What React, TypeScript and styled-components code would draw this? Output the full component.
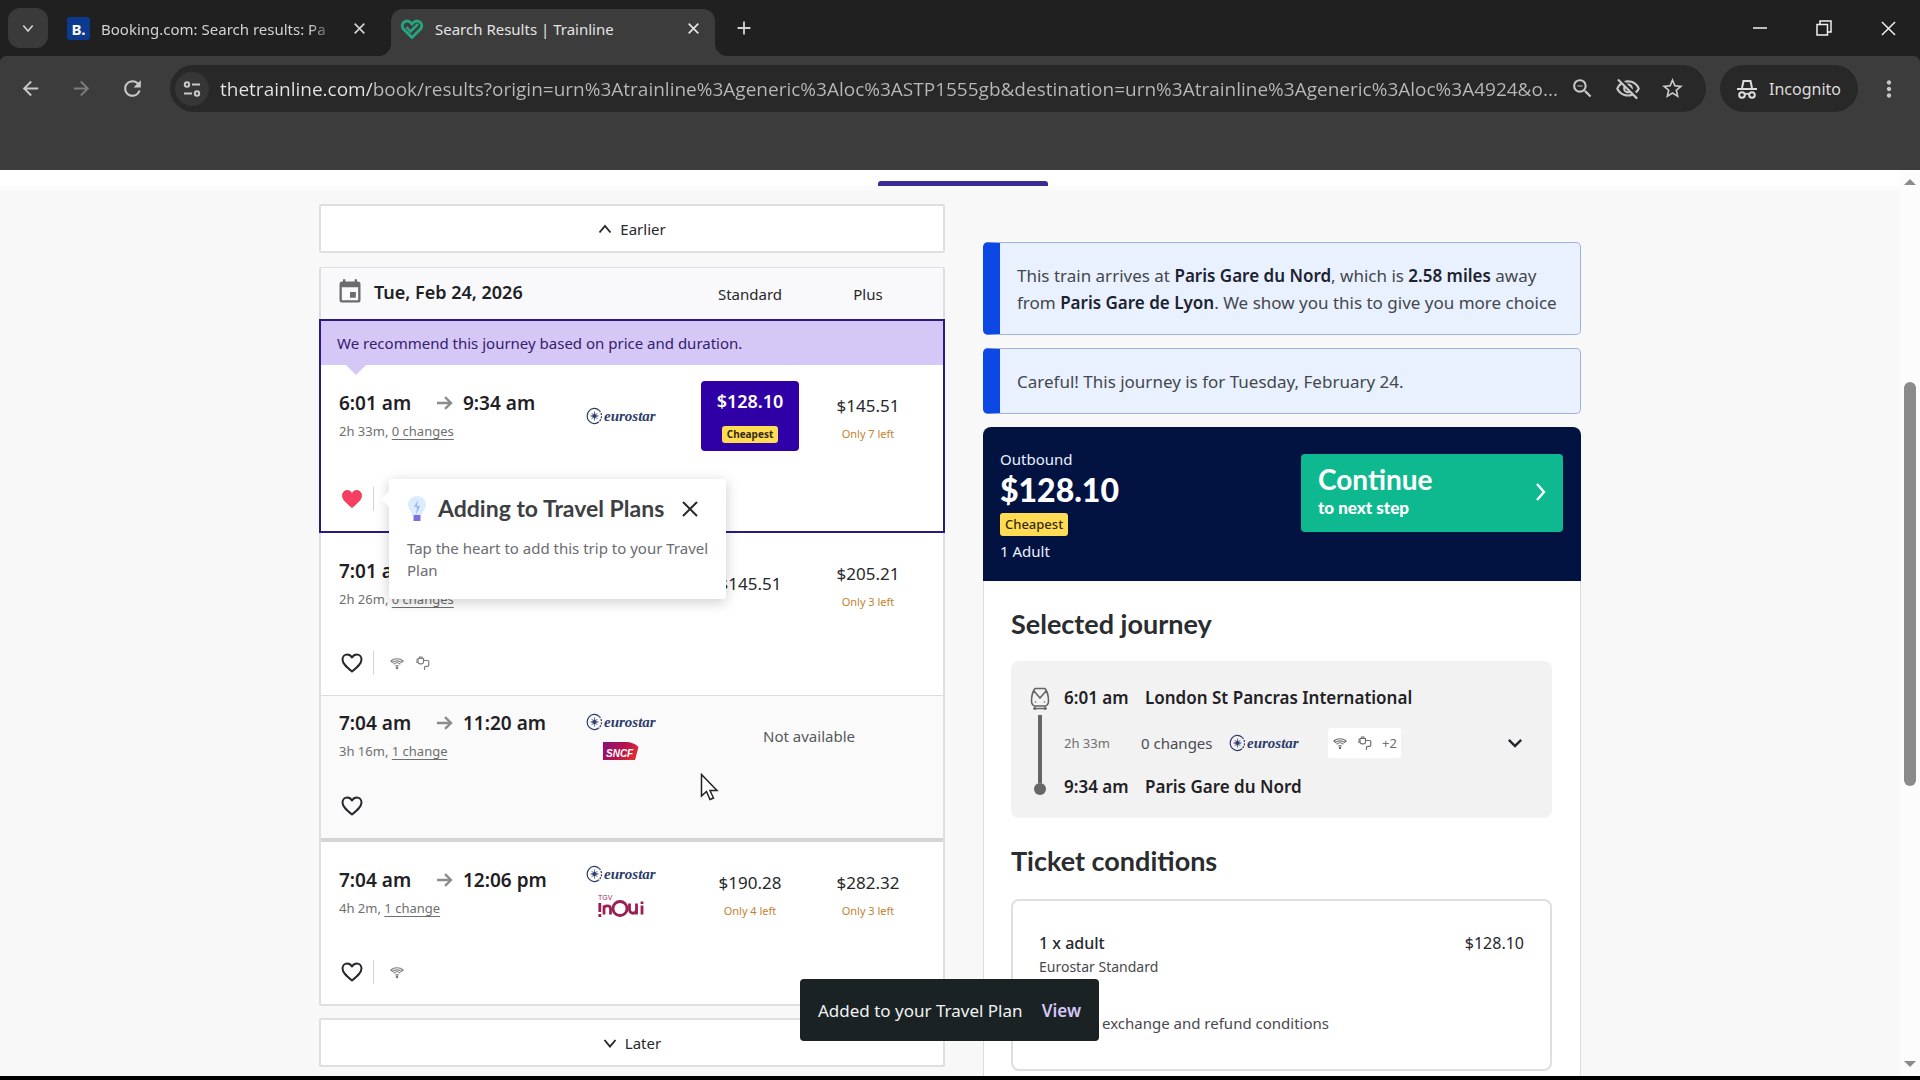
import React from 'react';
import styled, { createGlobalStyle, css } from 'styled-components';
import {
  MdAdd,
  MdArrowBack,
  MdArrowForward,
  MdClose,
  MdEvent,
  MdKeyboardArrowDown,
  MdMoreVert,
  MdOutlineVisibilityOff,
  MdRefresh,
  MdStarBorder,
  MdZoomOut,
} from 'react-icons/md';

const sans = '"Noto Sans", "Open Sans", sans-serif';
const display = 'Lato, "Open Sans", sans-serif';

const GlobalStyle = createGlobalStyle`
  * { box-sizing: border-box; }
  body { margin: 0; background: #000; font-family: ${sans}; color: #26282b; }
  button, input { font: inherit; color: inherit; }
  button { background: none; border: 0; padding: 0; cursor: pointer; }
  ul, h1, h2, p { margin: 0; padding: 0; list-style: none; }
  svg { display: block; flex: none; }
`;

const Screen = styled.div`
  position: relative;
  display: flex;
  flex-direction: column;
  min-height: 100vh;
  overflow: hidden;
  border-bottom: 4px solid #000;
  background: #f8f8f9;
`;

/* ---------- browser frame ---------- */

const TabStrip = styled.div`
  display: flex;
  align-items: flex-end;
  height: 56px;
  padding-left: 8px;
  background: #202020;
  color: #d2d2d2;
`;

const TabSearch = styled.button`
  display: grid;
  place-items: center;
  width: 40px;
  height: 40px;
  margin-bottom: 8px;
  border-radius: 12px;
  background: #3a3a3a;
`;

const Tab = styled.div<{ $active?: boolean }>`
  position: relative;
  display: flex;
  align-items: center;
  gap: 11px;
  width: ${(p) => (p.$active ? 324 : 343)}px;
  height: 47px;
  padding: ${(p) => (p.$active ? '0 11px 8px 9px' : '0 21px 8px 19px')};
  border-radius: 12px 12px 0 0;
  font-size: 15px;
  ${(p) =>
    p.$active &&
    css`
      background: #3c3c3c;
      color: #e4e4e4;
      &::before,
      &::after {
        content: '';
        position: absolute;
        bottom: 0;
        width: 12px;
        height: 12px;
      }
      &::before {
        right: 100%;
        background: radial-gradient(circle at 0 0, transparent 12px, #3c3c3c 12px);
      }
      &::after {
        left: 100%;
        background: radial-gradient(circle at 100% 0, transparent 12px, #3c3c3c 12px);
      }
    `}
`;

const TabTitle = styled.span<{ $fade?: boolean }>`
  flex: 1;
  min-width: 0;
  overflow: hidden;
  white-space: nowrap;
  ${(p) => p.$fade && css`mask-image: linear-gradient(to right, #000 88%, transparent);`}
`;

const TabClose = styled.button`
  display: grid;
  place-items: center;
  width: 22px;
  height: 22px;
`;

const Favicon = styled.span`
  display: grid;
  place-items: center;
  width: 23px;
  height: 23px;
  border-radius: 3px;
  background: #0b3a8e;
  color: #fff;
  font-size: 15px;
  font-weight: 700;
`;

const NewTab = styled.button`
  display: grid;
  place-items: center;
  width: 40px;
  height: 40px;
  margin: 0 0 8px 9px;
`;

const WindowControls = styled.div`
  display: flex;
  margin-left: auto;
  height: 56px;
  color: #f0f0f0;
`;

const WindowButton = styled.button`
  display: grid;
  place-items: center;
  width: 64px;
`;

const FrameBack = styled.div`
  background: #202020;
`;

const Toolbar = styled.div`
  display: flex;
  align-items: flex-start;
  height: 114px;
  padding: 9px 0 0 5px;
  background: #3c3c3c;
  border-radius: 6px 6px 0 0;
  color: #c8c8c8;
`;

const ToolButton = styled.button<{ $dim?: boolean }>`
  display: grid;
  place-items: center;
  width: 51px;
  height: 47px;
  color: ${(p) => (p.$dim ? '#7c7c7c' : '#c8c8c8')};
`;

const AddressBar = styled.div`
  display: flex;
  flex: 1;
  align-items: center;
  height: 47px;
  margin: 0 14px 0 12px;
  padding: 0 11px 0 5px;
  border-radius: 24px;
  background: #282828;
`;

const SiteInfo = styled.button`
  display: grid;
  place-items: center;
  width: 34px;
  height: 34px;
  border-radius: 50%;
  background: #363636;
`;

const AddressInput = styled.input`
  flex: 1;
  min-width: 0;
  height: 32px;
  margin-left: 11px;
  padding: 0;
  border: 0;
  outline: 0;
  font-family: 'Open Sans', sans-serif;
  font-size: 19px;
  color: transparent;
  background: linear-gradient(to right, #e6e6e6 152px, #b9b9b9 152px) text;
`;

const AddressAction = styled.button`
  display: grid;
  place-items: center;
  width: 45px;
  height: 40px;
`;

const Incognito = styled.button`
  display: flex;
  align-items: center;
  justify-content: center;
  gap: 12px;
  width: 138px;
  height: 47px;
  border-radius: 24px;
  background: #282828;
  color: #dcdcdc;
  font-size: 16px;
`;

const MenuButton = styled.button`
  display: grid;
  place-items: center;
  width: 62px;
  height: 47px;
`;

/* ---------- page ---------- */

const Viewport = styled.div`
  display: flex;
  flex: 1;
`;

const Page = styled.main`
  display: flex;
  flex: 1;
  flex-direction: column;
  background: linear-gradient(#fff 12px, #f8f8f9 22px);
`;

const ScrollTrack = styled.div`
  display: flex;
  flex-direction: column;
  align-items: center;
  justify-content: space-between;
  width: 20px;
  padding: 8px 0;
  background: #fcfcfc;
`;

const ScrollThumb = styled.div`
  width: 12px;
  height: 404px;
  margin-bottom: 78px;
  border-radius: 6px;
  background: #8b8b8b;
`;

const TabsEdge = styled.div`
  display: flex;
  width: 100%;
  max-width: 1262px;
  height: 34px;
  margin: 0 auto;
  padding: 11px 0 0 559px;
`;

const ActiveMarker = styled.div`
  width: 170px;
  height: 5px;
  border-radius: 3px 3px 0 0;
  background: #392c96;
`;

const Columns = styled.div`
  display: grid;
  flex: 1;
  grid-template-columns: minmax(0, 626fr) minmax(0, 598fr);
  gap: 38px;
  width: 100%;
  max-width: 1262px;
  margin: 0 auto;
`;

const Results = styled.section`
  display: flex;
  flex-direction: column;
  padding-bottom: 6px;
`;

const PagerButton = styled.button`
  display: flex;
  align-items: center;
  justify-content: center;
  gap: 8px;
  height: 49px;
  border: 2px solid #dfdfe0;
  border-radius: 2px;
  background: #fff;
  font-size: 15px;
`;

const JourneyTable = styled.div`
  margin: 14px 0 12px;
  border: 2px solid #dfdfe0;
  border-top-width: 1px;
  border-radius: 2px;
  background: #fff;
`;

const JourneyHeader = styled.header`
  display: grid;
  grid-template-columns: 1fr 118px 118px;
  align-items: center;
  height: 51px;
  padding: 0 16px 0 15px;
  background: #f9f9fb;
  font-size: 15px;
  text-align: center;
`;

const DateLabel = styled.h1`
  display: flex;
  align-items: center;
  gap: 10px;
  padding-bottom: 3px;
  font-size: 18px;
  font-weight: 600;
  color: #202124;
  svg {
    color: #6b6b6b;
  }
`;

const Journey = styled.li<{ $kind: 'selected' | 'open' | 'blocked' }>`
  position: relative;
  border-bottom: 1px solid #dcdcdc;
  &:last-child {
    border-bottom: 0;
  }
  ${(p) =>
    p.$kind === 'selected' &&
    css`
      margin: 0 -2px;
      border: 2px solid #2c1a80;
      &:not(:last-child) {
        border-bottom: 2px solid #2c1a80;
      }
    `}
  ${(p) =>
    p.$kind === 'blocked' &&
    css`
      border-bottom: 4px solid #d5d5d6;
      background: #fafafb;
    `}
`;

const Recommendation = styled.p`
  position: relative;
  padding: 0 16px;
  background: #d6c8f6;
  color: #33206f;
  font-size: 15px;
  line-height: 44px;
  &::after {
    content: '';
    position: absolute;
    top: 100%;
    left: 25px;
    border: 10px solid transparent;
    border-top-color: #d6c8f6;
    border-bottom: 0;
  }
`;

const JourneyMain = styled.div<{ $tight?: boolean }>`
  display: grid;
  grid-template-columns: 1fr 70px 35px 118px 118px;
  align-items: center;
  height: ${(p) => (p.$tight ? 75 : 86)}px;
  padding: ${(p) => (p.$tight ? 5 : 16)}px 16px 0 18px;
`;

const Times = styled.div`
  display: grid;
  grid-template-columns: 97px 27px auto;
  align-content: start;
  align-items: center;
  row-gap: 6px;
  height: 50px;
  line-height: 24px;
  font-size: 19px;
  font-weight: 600;
  color: #1f2124;
  svg {
    color: #8c8c8c;
  }
`;

const Duration = styled.div`
  grid-column: 1 / -1;
  font-size: 13px;
  font-weight: 400;
  line-height: 20px;
  color: #6f6f6f;
  button {
    text-decoration: underline;
    text-underline-offset: 3px;
  }
`;

const Operators = styled.div`
  display: flex;
  flex-direction: column;
  align-items: center;
  gap: 10px;
`;

const Fare = styled.button<{ $chosen?: boolean }>`
  display: flex;
  flex-direction: column;
  align-items: center;
  justify-self: center;
  gap: 6px;
  padding-top: 6px;
  font-size: 17px;
  line-height: 24px;
  ${(p) =>
    p.$chosen &&
    css`
      gap: 13px;
      width: 98px;
      height: 70px;
      padding-top: 8px;
      border-radius: 4px;
      background: #2f00a5;
      color: #fff;
      font-size: 18px;
      font-weight: 600;
    `}
`;

const SingleFare = styled(Fare)`
  padding-top: 0;
`;

const SeatsLeft = styled.span`
  font-size: 11px;
  line-height: 20px;
  color: #c47f30;
`;

const Badge = styled.span<{ $large?: boolean }>`
  padding: 0 5px;
  border-radius: 3px;
  background: #ffdc54;
  color: #35290b;
  font-size: ${(p) => (p.$large ? 13 : 10)}px;
  font-weight: ${(p) => (p.$large ? 500 : 700)};
  line-height: ${(p) => (p.$large ? 23 : 17)}px;
`;

const Unavailable = styled.span`
  grid-column: 4 / 6;
  justify-self: center;
  font-size: 15px;
  color: #55585c;
`;

const JourneyExtras = styled.div<{ $gap: number }>`
  display: flex;
  align-items: center;
  gap: 9px;
  margin-top: ${(p) => p.$gap}px;
  padding: 0 19px 20px;
  color: #7a7a7a;
`;

const HeartButton = styled.button`
  display: grid;
  place-items: center;
  width: 24px;
  height: 24px;
  color: #26282b;
`;

const Amenities = styled.div`
  display: flex;
  align-items: center;
  gap: 10px;
  height: 24px;
  padding-left: 15px;
  border-left: 1px solid #d6d6d6;
`;

const Tip = styled.aside`
  position: absolute;
  z-index: 2;
  top: 158px;
  left: 68px;
  width: 337px;
  height: 120px;
  padding: 13px 12px 0 18px;
  border-radius: 3px;
  background: #fff;
  box-shadow: 0 3px 14px rgba(0, 0, 0, 0.2);
  &::before {
    content: '';
    position: absolute;
    top: 12px;
    right: 100%;
    border: 8px solid transparent;
    border-right-color: #fff;
    border-left: 0;
  }
`;

const TipHead = styled.div`
  display: flex;
  align-items: center;
  gap: 11px;
  height: 34px;
  padding-right: 13px;
  h2 {
    flex: 1;
    font-family: ${display};
    font-size: 23px;
    font-weight: 700;
    line-height: 30px;
    padding-bottom: 2px;
    white-space: nowrap;
    color: #3d3f43;
  }
`;

const TipText = styled.p`
  margin-top: 11px;
  font-size: 15px;
  line-height: 22px;
  color: #6a6c70;
`;

/* ---------- right column ---------- */

const Summary = styled.section`
  display: flex;
  flex-direction: column;
  gap: 13px;
  padding-top: 38px;
`;

const Notice = styled.p`
  padding: 19px 14px 18px 17px;
  border: 1px solid #9fb2e2;
  border-left: 17px solid #0c49e4;
  border-radius: 5px;
  background: #e9f1fe;
  font-size: 17px;
  line-height: 27px;
  color: #44474d;
  b {
    font-weight: 600;
    color: #1c2230;
  }
`;

const Basket = styled.div`
  display: flex;
  flex: 1;
  flex-direction: column;
  background: #fff;
`;

const BasketHead = styled.header`
  display: flex;
  align-items: flex-start;
  justify-content: space-between;
  padding: 21px 18px 19px 17px;
  border-radius: 8px 8px 0 0;
  background: #021342;
  color: #eaf0ff;
`;

const Total = styled.div`
  display: flex;
  flex-direction: column;
  align-items: flex-start;
  font-size: 15px;
  line-height: 22px;
  strong {
    font-family: ${display};
    font-size: 32px;
    font-weight: 900;
    line-height: 39px;
    color: #fff;
  }
  ${Badge} {
    margin: 4px 0;
  }
`;

const ContinueButton = styled.button`
  display: flex;
  align-items: center;
  justify-content: space-between;
  width: 262px;
  height: 78px;
  margin-top: 6px;
  padding: 0 13px 2px 17px;
  border-radius: 4px;
  background: #0fb98f;
  color: #fff;
  font-family: ${display};
  font-size: 17px;
  font-weight: 900;
  line-height: 26px;
  text-align: left;
  strong {
    display: block;
    font-size: 28px;
    font-weight: 700;
    line-height: 32px;
  }
`;

const BasketBody = styled.div`
  display: flex;
  flex: 1;
  flex-direction: column;
  padding: 24px 28px 4px 27px;
  border: solid #dcdcde;
  border-width: 0 1px;
`;

const Heading = styled.h2`
  font-family: ${display};
  font-size: 27px;
  font-weight: 700;
  line-height: 38px;
  color: #2a2c2f;
`;

const Leg = styled.div`
  display: flex;
  gap: 14px;
  margin: 18px 0 24px;
  padding: 24px 25px 18px 18px;
  border-radius: 8px;
  background: #f2f2f3;
`;

const LegTrack = styled.div`
  display: flex;
  flex-direction: column;
  align-items: center;
  width: 21px;
  padding-top: 2px;
  color: #666;
`;

const LegLine = styled.div`
  width: 4px;
  height: 68px;
  margin-top: 4px;
  background: #666;
`;

const LegDot = styled.div`
  width: 12px;
  height: 12px;
  border-radius: 50%;
  background: #666;
`;

const LegDetails = styled.div`
  display: flex;
  flex: 1;
  flex-direction: column;
  justify-content: space-between;
  min-height: 115px;
`;

const Stop = styled.div`
  display: grid;
  grid-template-columns: 66px auto;
  gap: 15px;
  font-size: 17px;
  font-weight: 600;
  line-height: 26px;
  color: #1f2124;
`;

const LegMeta = styled.div`
  display: flex;
  align-items: center;
  height: 30px;
  font-size: 15px;
  color: #4a4c50;
`;

const LegDuration = styled.span`
  width: 77px;
  font-size: 13px;
  color: #6f6f6f;
`;

const LegChanges = styled.span`
  width: 88px;
`;

const LegAmenities = styled.div`
  display: flex;
  align-items: center;
  gap: 9px;
  height: 30px;
  margin-left: 29px;
  padding: 0 4px;
  border-radius: 3px;
  background: #fff;
  font-size: 13px;
  color: #6f6f6f;
`;

const ExpandButton = styled.button`
  display: grid;
  place-items: center;
  width: 26px;
  height: 30px;
  margin-left: auto;
  color: #26282b;
`;

const Ticket = styled.div`
  display: grid;
  grid-template-columns: 1fr auto;
  align-content: start;
  height: 172px;
  margin-top: 19px;
  padding: 29px 26px 0 26px;
  border: 2px solid #dfdfe1;
  border-radius: 8px;
  font-size: 16px;
  line-height: 26px;
  b {
    font-weight: 500;
  }
`;

const TicketClass = styled.span`
  grid-column: 1 / -1;
  font-size: 14px;
  line-height: 22px;
  color: #47494d;
`;

const ConditionsButton = styled.button`
  display: flex;
  grid-column: 1 / -1;
  align-items: center;
  gap: 43px;
  margin-top: 32px;
  font-size: 15px;
  line-height: 26px;
  color: #47494d;
`;

const Toast = styled.div`
  position: absolute;
  z-index: 3;
  bottom: 35px;
  left: calc(50% - 160px);
  display: flex;
  align-items: center;
  justify-content: space-between;
  width: 299px;
  height: 62px;
  padding: 0 18px;
  border-radius: 4px;
  background: #1b2224;
  color: #f1f3f3;
  font-size: 17px;
  white-space: nowrap;
  a {
    color: #d3c6f6;
    font-weight: 600;
    text-decoration: none;
  }
`;

const Pointer = styled.svg`
  position: absolute;
  z-index: 4;
  top: 77px;
  left: 379px;
`;

/* ---------- logos and small drawings ---------- */

const EurostarMark = styled.span`
  display: flex;
  align-items: center;
  gap: 2px;
  width: 70px;
  height: 20px;
  font-family: 'Liberation Serif', serif;
  font-size: 15px;
  font-style: italic;
  font-weight: 700;
  line-height: 18px;
  color: #2c3a6b;
`;

const Eurostar = () => (
  <EurostarMark>
    <svg width="16" height="18" viewBox="0 0 16 18" fill="none" stroke="#2c3a6b">
      <path d="M13 3.2A7.2 7.6 0 1 0 13 14.8" strokeWidth="1.2" />
      <path d="M13.2 3.4A7.2 7.6 0 0 1 13.2 14.6" strokeWidth="1.2" strokeDasharray="2 1.2" />
      <path d="M8.5 4.5c.2 3 .9 4.2 4 4.5-3.100.3-3.800 1.500-4 4.500-.2-3-.9-4.200-4-4.500 3.100-.3 3.800-1.500 4-4.500z" fill="#2c3a6b" strokeWidth="0.4" />
      <path d="M5.800 6.200l5.400 5.600M11.200 6.200l-5.400 5.600" strokeWidth="0.9" />
    </svg>
    eurostar
  </EurostarMark>
);

const Sncf = () => (
  <svg width="36" height="18" viewBox="0 0 36 18" role="img" aria-label="SNCF">
    <defs>
      <linearGradient id="sncf" x1="0" x2="1" y1="0" y2="0.4">
        <stop offset="0" stopColor="#87117a" />
        <stop offset="0.6" stopColor="#b5124f" />
        <stop offset="1" stopColor="#dd2a35" />
      </linearGradient>
    </defs>
    <path d="M0 0h22c6 0 11 2 13.500 5L32 18H0z" fill="url(#sncf)" />
    <text x="3" y="15" fill="#fff" fontFamily="Liberation Sans, sans-serif" fontSize="10" fontWeight="700" fontStyle="italic">
      SNCF
    </text>
  </svg>
);

const Inoui = () => (
  <svg width="46" height="28" viewBox="0 0 46 28" role="img" aria-label="TGV inOui" fill="none" stroke="#9b1f55" strokeWidth="2.800">
    <text x="0" y="6" fill="#9b1f55" stroke="none" fontFamily="Liberation Sans, sans-serif" fontSize="7">
      TGV
    </text>
    <path d="M1.800 9v9M1.800 20v3M6 20.500v-9M6 14.500c0-3.500 6.500-3.500 6.500 0v6M31.500 9.500v6c0 5 7 5 7 0v-6M38.500 15v5.500M44 11.500v9M44 7.500v2.500" />
    <circle cx="22" cy="14.500" r="7" />
  </svg>
);

const Arrow = () => (
  <svg width="18" height="16" viewBox="0 0 18 16" fill="none" stroke="currentColor" strokeWidth="2.400">
    <path d="M1 8h14M9 2.200L15 8l-6 5.800" />
  </svg>
);

const Heart = ({ filled }: { filled?: boolean }) => (
  <svg width="22" height="20" viewBox="0 0 22 20" fill={filled ? '#f43f63' : 'none'} stroke={filled ? '#f43f63' : 'currentColor'} strokeWidth={filled ? 1 : 2} strokeLinejoin="round">
    <path d="M11 18.500C6 14.500 1.500 10.800 1.500 6.500 1.500 3.500 3.600 1.500 6.200 1.500c2 0 3.700 1.100 4.800 3 1.100-1.900 2.800-3 4.800-3 2.600 0 4.700 2 4.700 5 0 4.300-4.500 8-9.500 12z" />
  </svg>
);

const Wifi = () => (
  <svg width="16" height="14" viewBox="0 0 16 14" fill="none" stroke="currentColor" strokeWidth="1.200">
    <path d="M2 5C5 2 11 2 14 5L12.500 6.400C10 4.400 6 4.400 3.500 6.400zM4.600 8.200c1.900-1.800 4.900-1.800 6.800 0M6.500 10.200c.9-.8 2.100-.8 3 0" />
    <circle cx="8" cy="12" r="0.700" fill="currentColor" />
  </svg>
);

const Plug = () => (
  <svg width="16" height="16" viewBox="0 0 16 16" fill="none" stroke="currentColor" strokeWidth="1.200">
    <path d="M3 3.500h5.500V7c0 1-.8 1.800-1.800 1.800H5A2 2 0 0 1 3 6.800zM3 5H1M3 7.200H1M4.500 3.500V2h2.500v1.500M8.500 5.500h4c.8 0 1.300.5 1.300 1.300V10c0 .8-.5 1.300-1.300 1.300h-1.700c-.8 0-1.300.5-1.300 1.300V15" />
  </svg>
);

const Chevron = ({ up, size = 14 }: { up?: boolean; size?: number }) => (
  <svg width={size} height={size} viewBox="0 0 14 14" fill="none" stroke="currentColor" strokeWidth="1.900">
    <path d={up ? 'M1.500 10.500L7 4l5.500 6.500' : 'M1.500 4L7 10.500 12.500 4'} />
  </svg>
);

const Cross = ({ size, width = 1.6 }: { size: number; width?: number }) => (
  <svg width={size} height={size} viewBox="0 0 16 16" fill="none" stroke="currentColor" strokeWidth={width}>
    <path d="M1 1l14 14M15 1L1 15" />
  </svg>
);

const Bulb = () => (
  <svg width="20" height="28" viewBox="0 0 20 28">
    <path d="M10 1c5 0 9 3.700 9 8.500 0 4-3 6.200-4.500 10.500h-9C4 15.700 1 13.500 1 9.500 1 4.700 5 1 10 1z" fill="#dcebff" />
    <path d="M11 5L7 12h3l-1 8 4-9h-3z" fill="#9db7f5" />
    <path d="M6.500 20h7v6h-7z" fill="#7d6fe0" />
  </svg>
);

const TrainlineHeart = () => (
  <svg width="24" height="22" viewBox="0 0 24 22" fill="none" stroke="#27a37f" strokeWidth="3">
    <path d="M12 19.500L3.500 11C-.5 6 6 .5 10.500 4.500L12 6l1.500-1.500c4.500-4 11 1.500 7 6.500z" />
    <path d="M6.500 9l4 4.500L18 6" strokeWidth="2.600" />
  </svg>
);

const Spy = () => (
  <svg width="20" height="20" viewBox="0 0 20 20" fill="none" stroke="currentColor" strokeWidth="2">
    <path d="M5 9l1.500-7h7L15 9M0 10h20M8 15.500c1-1 3-1 4 0" />
    <circle cx="5" cy="16" r="2.800" />
    <circle cx="15" cy="16" r="2.800" />
  </svg>
);

const Tune = () => (
  <svg width="18" height="18" viewBox="0 0 18 18" fill="none" stroke="currentColor" strokeWidth="2">
    <circle cx="4" cy="4.500" r="2.200" />
    <path d="M9 4.500h8M1 13.500h8" />
    <circle cx="14" cy="13.500" r="2.200" />
  </svg>
);

const Train = () => (
  <svg width="20" height="24" viewBox="0 0 20 24" fill="none" stroke="currentColor" strokeWidth="1.600">
    <path d="M5 1.500h10c2 2.500 3.500 8 3.500 13 0 2-1.500 4.500-3.500 4.500H5c-2 0-3.500-2.500-3.500-4.500 0-5 1.500-10.500 3.500-13zM4 4l6 7 6-7M5 19v4M15 19v4M3 21.500h14" />
    <circle cx="5.500" cy="15" r="0.800" fill="currentColor" stroke="none" />
    <circle cx="14.500" cy="15" r="0.800" fill="currentColor" stroke="none" />
  </svg>
);

/* ---------- data ---------- */

type Price = { amount: string; left?: string; cheapest?: boolean };
type Trip = {
  depart: string;
  arrive: string;
  duration: string;
  changes: string;
  operator?: 'sncf' | 'inoui';
  standard?: Price;
  plus?: Price;
  amenities: string[];
  kind: 'selected' | 'open' | 'blocked';
};

const trips: Trip[] = [
  { depart: '6:01 am', arrive: '9:34 am', duration: '2h 33m', changes: '0 changes', standard: { amount: '$128.10', cheapest: true }, plus: { amount: '$145.51', left: 'Only 7 left' }, amenities: [], kind: 'selected' },
  { depart: '7:01 am', arrive: '10:27 am', duration: '2h 26m', changes: '0 changes', standard: { amount: '$145.51' }, plus: { amount: '$205.21', left: 'Only 3 left' }, amenities: ['wifi', 'plug'], kind: 'open' },
  { depart: '7:04 am', arrive: '11:20 am', duration: '3h 16m', changes: '1 change', operator: 'sncf', amenities: [], kind: 'blocked' },
  { depart: '7:04 am', arrive: '12:06 pm', duration: '4h 2m', changes: '1 change', operator: 'inoui', standard: { amount: '$190.28', left: 'Only 4 left' }, plus: { amount: '$282.32', left: 'Only 3 left' }, amenities: ['wifi'], kind: 'open' },
];

const FareCell = ({ price }: { price: Price }) => {
  if (price.cheapest) {
    return (
      <Fare $chosen aria-pressed="true">
        {price.amount}
        <Badge>Cheapest</Badge>
      </Fare>
    );
  }
  return price.left ? (
    <Fare>
      {price.amount}
      <SeatsLeft>{price.left}</SeatsLeft>
    </Fare>
  ) : (
    <SingleFare>{price.amount}</SingleFare>
  );
};

const footerGap = { selected: 36, open: 32, blocked: 23 };

const JourneyRow = ({ trip }: { trip: Trip }) => {
  const selected = trip.kind === 'selected';
  return (
    <Journey $kind={trip.kind}>
      {selected && <Recommendation>We recommend this journey based on price and duration.</Recommendation>}
      <JourneyMain $tight={trip.kind === 'blocked'}>
        <Times>
          <span>{trip.depart}</span>
          <Arrow />
          <span>{trip.arrive}</span>
          <Duration>
            {trip.duration}, <button>{trip.changes}</button>
          </Duration>
        </Times>
        <Operators>
          <Eurostar />
          {trip.operator === 'sncf' && <Sncf />}
          {trip.operator === 'inoui' && <Inoui />}
        </Operators>
        <span />
        {trip.standard && trip.plus ? (
          <>
            <FareCell price={trip.standard} />
            <FareCell price={trip.plus} />
          </>
        ) : (
          <Unavailable>Not available</Unavailable>
        )}
      </JourneyMain>
      <JourneyExtras $gap={footerGap[trip.kind]}>
        <HeartButton aria-label="Save to Travel Plan">
          <Heart filled={selected} />
        </HeartButton>
        {trip.kind !== 'blocked' && (
          <Amenities>
            {trip.amenities.map((a) => (a === 'wifi' ? <Wifi key={a} /> : <Plug key={a} />))}
          </Amenities>
        )}
      </JourneyExtras>
      {selected && (
        <Tip>
          <TipHead>
            <Bulb />
            <h2>Adding to Travel Plans</h2>
            <TabClose aria-label="Dismiss">
              <Cross size={16} width={2} />
            </TabClose>
          </TipHead>
          <TipText>Tap the heart to add this trip to your Travel Plan</TipText>
        </Tip>
      )}
      {trip.kind === 'blocked' && (
        <Pointer width="19" height="28" viewBox="0 0 19 28">
          <path d="M1.500 1.500v21.500l5-4.500 3.500 8 3.500-1.500-3.500-7.500h7z" fill="#fff" stroke="#222" strokeWidth="1.500" />
        </Pointer>
      )}
    </Journey>
  );
};

export default function App() {
  return (
    <>
      <GlobalStyle />
      <Screen>
        <TabStrip>
          <TabSearch aria-label="Search tabs">
            <Chevron size={12} />
          </TabSearch>
          <Tab>
            <Favicon>B.</Favicon>
            <TabTitle $fade>Booking.com: Search results: Pa</TabTitle>
            <TabClose aria-label="Close tab">
              <Cross size={11} width={2.4} />
            </TabClose>
          </Tab>
          <Tab $active>
            <TrainlineHeart />
            <TabTitle>Search Results | Trainline</TabTitle>
            <TabClose aria-label="Close tab">
              <Cross size={11} width={2.4} />
            </TabClose>
          </Tab>
          <NewTab aria-label="New tab">
            <MdAdd size={22} />
          </NewTab>
          <WindowControls>
            <WindowButton aria-label="Minimise">
              <svg width="14" height="14" viewBox="0 0 14 14" stroke="currentColor" strokeWidth="1.500">
                <path d="M0 7h14" />
              </svg>
            </WindowButton>
            <WindowButton aria-label="Restore">
              <svg width="16" height="16" viewBox="0 0 16 16" fill="none" stroke="currentColor" strokeWidth="1.500">
                <path d="M1 4.500h10.500V15H1zM4 4V1h11v11h-3" />
              </svg>
            </WindowButton>
            <WindowButton aria-label="Close window">
              <Cross size={15} width={1.6} />
            </WindowButton>
          </WindowControls>
        </TabStrip>
        <FrameBack>
          <Toolbar>
            <ToolButton aria-label="Back">
              <MdArrowBack size={23} />
            </ToolButton>
            <ToolButton aria-label="Forward" $dim>
              <MdArrowForward size={23} />
            </ToolButton>
            <ToolButton aria-label="Reload">
              <MdRefresh size={25} />
            </ToolButton>
            <AddressBar>
              <SiteInfo aria-label="Site information">
                <Tune />
              </SiteInfo>
              <AddressInput
                aria-label="Address"
                readOnly
                value="thetrainline.com/book/results?origin=urn%3Atrainline%3Ageneric%3Aloc%3ASTP1555gb&destination=urn%3Atrainline%3Ageneric%3Aloc%3A4924&o..."
              />
              <AddressAction aria-label="Zoom">
                <MdZoomOut size={25} />
              </AddressAction>
              <AddressAction aria-label="Tracking blocked">
                <MdOutlineVisibilityOff size={26} />
              </AddressAction>
              <AddressAction aria-label="Bookmark">
                <MdStarBorder size={25} />
              </AddressAction>
            </AddressBar>
            <Incognito>
              <Spy />
              Incognito
            </Incognito>
            <MenuButton aria-label="Menu">
              <MdMoreVert size={26} />
            </MenuButton>
          </Toolbar>
        </FrameBack>

        <Viewport>
          <Page>
            <TabsEdge>
              <ActiveMarker />
            </TabsEdge>
            <Columns>
              <Results>
                <PagerButton>
                  <Chevron up />
                  Earlier
                </PagerButton>
                <JourneyTable>
                  <JourneyHeader>
                    <DateLabel>
                      <MdEvent size={28} />
                      Tue, Feb 24, 2026
                    </DateLabel>
                    <span>Standard</span>
                    <span>Plus</span>
                  </JourneyHeader>
                  <ul>
                    {trips.map((t) => (
                      <JourneyRow key={t.depart + t.arrive} trip={t} />
                    ))}
                  </ul>
                </JourneyTable>
                <PagerButton>
                  <Chevron />
                  Later
                </PagerButton>
              </Results>

              <Summary>
                <Notice>
                  This train arrives at <b>Paris Gare du Nord</b>, which is <b>2.58 miles</b> away from <b>Paris Gare de Lyon</b>. We show you this to give you more choice
                </Notice>
                <Notice>Careful! This journey is for Tuesday, February 24.</Notice>
                <Basket>
                  <BasketHead>
                    <Total>
                      <span>Outbound</span>
                      <strong>$128.10</strong>
                      <Badge $large>Cheapest</Badge>
                      <span>1 Adult</span>
                    </Total>
                    <ContinueButton>
                      <span>
                        <strong>Continue</strong>
                        to next step
                      </span>
                      <svg width="18" height="20" viewBox="0 0 18 20" fill="none" stroke="currentColor" strokeWidth="2.400">
                        <path d="M5 2l7 8-7 8" />
                      </svg>
                    </ContinueButton>
                  </BasketHead>
                  <BasketBody>
                    <Heading>Selected journey</Heading>
                    <Leg>
                      <LegTrack>
                        <Train />
                        <LegLine />
                        <LegDot />
                      </LegTrack>
                      <LegDetails>
                        <Stop>
                          <span>6:01 am</span>
                          <span>London St Pancras International</span>
                        </Stop>
                        <LegMeta>
                          <LegDuration>2h 33m</LegDuration>
                          <LegChanges>0 changes</LegChanges>
                          <Eurostar />
                          <LegAmenities>
                            <Wifi />
                            <Plug />
                            <span>+2</span>
                          </LegAmenities>
                          <ExpandButton aria-label="Show journey details">
                            <MdKeyboardArrowDown size={28} />
                          </ExpandButton>
                        </LegMeta>
                        <Stop>
                          <span>9:34 am</span>
                          <span>Paris Gare du Nord</span>
                        </Stop>
                      </LegDetails>
                    </Leg>
                    <Heading>Ticket conditions</Heading>
                    <Ticket>
                      <b>1 x adult</b>
                      <span>$128.10</span>
                      <TicketClass>Eurostar Standard</TicketClass>
                      <ConditionsButton>
                        <MdClose size={20} />
                        exchange and refund conditions
                      </ConditionsButton>
                    </Ticket>
                  </BasketBody>
                </Basket>
              </Summary>
            </Columns>
          </Page>
          <ScrollTrack>
            <svg width="12" height="8" viewBox="0 0 12 8" fill="#8b8b8b">
              <path d="M6 1l6 6H0z" />
            </svg>
            <ScrollThumb />
            <svg width="12" height="8" viewBox="0 0 12 8" fill="#8b8b8b">
              <path d="M6 7L0 1h12z" />
            </svg>
          </ScrollTrack>
        </Viewport>
        <Toast role="status">
          <span>Added to your Travel Plan</span>
          <a href="#travel-plan">View</a>
        </Toast>
      </Screen>
    </>
  );
}
